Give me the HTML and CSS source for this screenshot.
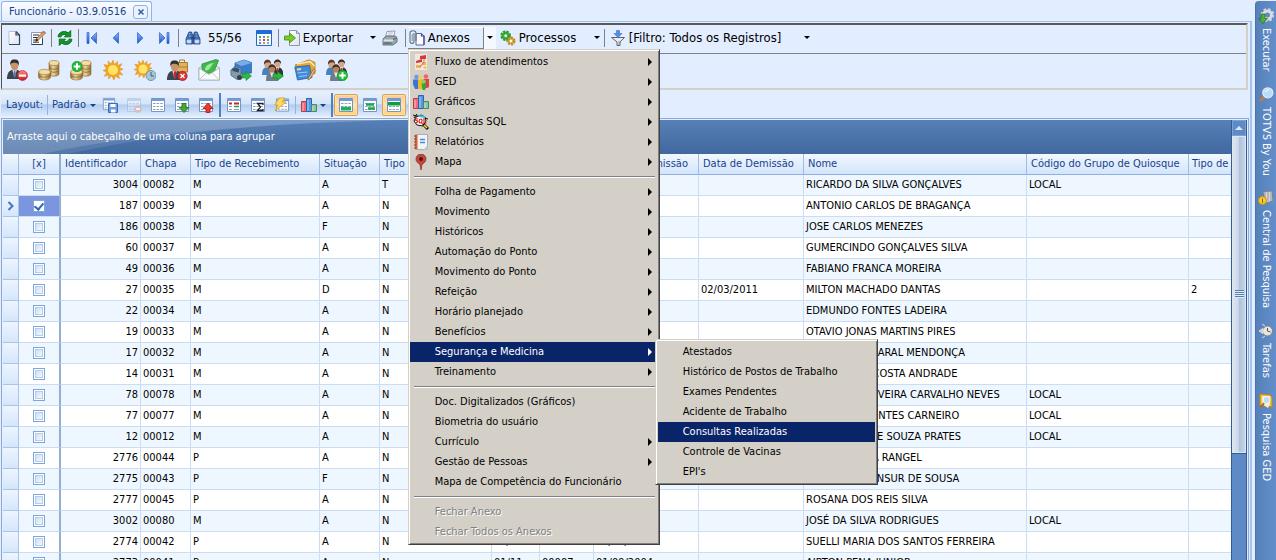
FILE: index.html
```
<!DOCTYPE html>
<html lang="pt-BR">
<head>
<meta charset="utf-8">
<title>Funcionário</title>
<link rel="stylesheet" href="styles.css">
</head>
<body>
<svg class="defs" aria-hidden="true">
  <defs>
    <linearGradient id="gold" x2="1" y2="0"><stop offset="0" stop-color="#8f6c33"/><stop offset=".4" stop-color="#edd9a0"/><stop offset="1" stop-color="#966e31"/></linearGradient>
    <linearGradient id="blue" x2="0" y2="1"><stop offset="0" stop-color="#8fbaf5"/><stop offset="1" stop-color="#1b52c4"/></linearGradient>
    <linearGradient id="paper" x2="1" y2="1"><stop offset="0" stop-color="#fff"/><stop offset="1" stop-color="#dde3ee"/></linearGradient>
    <linearGradient id="red" x2="0" y2="1"><stop offset="0" stop-color="#f88"/><stop offset="1" stop-color="#c61a1a"/></linearGradient>
  </defs>
  <symbol id="i-new" viewBox="0 0 16 16"><path d="M3 1.500h7l3.500 3.500v9.500H3z" fill="url(#paper)"/><path d="M3 14V1.500h7" fill="none" stroke="#b9c0ce"/><path d="M10 1.500V5h3.500v9.500H3M10 1.500L13.500 5" fill="none" stroke="#39445d" stroke-width="1.200"/></symbol>
  <symbol id="i-edit" viewBox="0 0 16 16"><path d="M1.500 2.500h11v12h-11z" fill="#fff" stroke="#8f9ab0"/><path d="M1.500 14.500h11v-6" fill="none" stroke="#333c50"/><path d="M3 5h6M3 7.500h5M3 10h3M3 12.200h6" stroke="#222c4e"/><path d="M13.500 1l2 2-7 7-3 1.500 1-3z" fill="#dca562" stroke="#8b5a35" stroke-width=".7"/><path d="M5.500 11.500l1-3 2 1.700z" fill="#222"/><path d="M13 1.500l2.200 2" stroke="#d46a55" stroke-width="1.500"/></symbol>
  <symbol id="i-refresh" viewBox="1 1 14 14"><path d="M2 7c0-4 5-6 9-3.500l2-2V7H7.500l1.700-1.700C7 4.300 5 5 4.500 7zM14 9c0 4-5 6-9 3.500l-2 2V9h5.500l-1.700 1.700C9 11.700 11 11 11.500 9z" fill="#109a25" stroke="#04671a" stroke-width=".8"/></symbol>
  <symbol id="i-prev" viewBox="0 0 16 16"><path d="M10.500 2.500v11L5 8z" fill="url(#blue)" stroke="#2a62c9" stroke-width=".7"/></symbol>
  <symbol id="i-next" viewBox="0 0 16 16"><path d="M5.500 2.500v11L11 8z" fill="url(#blue)" stroke="#2a62c9" stroke-width=".7"/></symbol>
  <symbol id="i-first" viewBox="0 0 16 16"><path d="M3 2.500h2v11H3zM12.500 2.500v11L7 8z" fill="url(#blue)" stroke="#2a62c9" stroke-width=".7"/></symbol>
  <symbol id="i-last" viewBox="0 0 16 16"><path d="M11 2.500h2v11h-2zM3.500 2.500v11L9 8z" fill="url(#blue)" stroke="#2a62c9" stroke-width=".7"/></symbol>
  <symbol id="i-bino" viewBox="0 0 16 16"><path d="M4 2h2.500l1 3v9H1V9zM12 2H9.500l-1 3v9H15V9z" fill="#426fb6" stroke="#1d3f7c" stroke-width=".8"/><path d="M6 7h4v2H6z" fill="#244a8a"/><path d="M2 10h4v3H2zM10 10h4v3h-4zM4 3.500h1.500M10.500 3.500H12M4 6h1.500M11 6h1.500" fill="#d7e6fa" stroke="#a9c5ec" stroke-width=".8"/></symbol>
  <symbol id="i-cal" viewBox="0 0 16 16"><path d="M.5.5h15v15H.5z" fill="#f6faff" stroke="#2768c7"/><path d="M1 1h14v3H1z" fill="#1d6bd8"/><path d="M3 6h2v2H3zM11 9h2v2h-2z" fill="#45ae54"/><path d="M7 6h2v2H7zM3 12h2v2H3z" fill="#5d85df"/><path d="M11 6h2v2h-2zM7 12h2v2H7z" fill="#e48a38"/><path d="M3 9h2v2H3zM11 12h2v2h-2z" fill="#a29bc9"/><path d="M7 9h2v2H7z" fill="#e04040"/></symbol>
  <symbol id="i-export" viewBox="0 0 16 16"><path d="M5.500.5h7l3 3v12h-10z" fill="url(#paper)" stroke="#8c98b0"/><path d="M12.500.5v3h3" fill="#c8d2e2" stroke="#8c98b0"/><path d="M.5 6h5V3l6 5-6 5v-3h-5z" fill="#7ccb22" stroke="#478a16" stroke-width=".8"/></symbol>
  <symbol id="i-print" viewBox="0 0 16 16"><path d="M5 1.500L13 1l-1.500 6H3.500z" fill="#fff" stroke="#7d8794" stroke-width=".8"/><path d="M6 3h5M5.500 5h5" stroke="#93a5bc" stroke-width=".8"/><path d="M1 9l3-3h9.500L15 8v4l-4 3H1z" fill="#9ba6b1" stroke="#515b66" stroke-width=".8"/><path d="M1.500 9.500H11v2H1.500z" fill="#dce1e5"/><path d="M2 13h8" stroke="#424a55"/><path d="M11 9.500L14.500 8" stroke="#555"/><path d="M8 12h2.500v1.500H8z" fill="#2cc24a"/></symbol>
  <symbol id="i-clip" viewBox="0 0 16 16"><path d="M7 3.500h5.500L15 6v9H7z" fill="#fbfcff" stroke="#5f6798"/><path d="M12.500 3.500V6H15v9" fill="none" stroke="#414a89" stroke-width="1.200"/><path d="M5 3v8.500c0 2.500-4 2.500-4 0V3c0-3 6-3 6 0v8" fill="none" stroke="#5e7380" stroke-width="1.100"/><path d="M3.200 4v7" stroke="#72909c"/></symbol>
  <symbol id="i-gears" viewBox="0 0 16 16"><circle cx="5.700" cy="5.700" r="3.800" fill="#4ab844" stroke="#2f9a30" stroke-dasharray="2.200 .8" stroke-width="3"/><circle cx="5.700" cy="5.700" r="1.300" fill="#eaffea"/><circle cx="11" cy="11" r="3.200" fill="#eab842" stroke="#c08c28" stroke-dasharray="2 .9" stroke-width="2.600"/><circle cx="11" cy="11" r="1.200" fill="#fff"/></symbol>
  <symbol id="i-filter" viewBox="0 0 16 16"><path d="M1.500 7.500h13L10 12v3.500H7V12z" fill="#e9edf1" stroke="#5a6470"/><path d="M9 11v4" stroke="#8a939f"/><path d="M6.500.5h3v3H12L8 7.500 4 3.500h2.500z" fill="#4f8ce2" stroke="#3673ca" stroke-width=".6"/></symbol>

  <symbol id="p-man" viewBox="0 0 22 22"><path d="M1 21c0-7 3-10 8-10s8 3 8 10z" fill="#3e444d"/><path d="M6.500 11h5L9 19z" fill="#f4f6f9"/><path d="M8.300 12h1.500l.8 5-1.600 3-1.500-3z" fill="#5779aa"/><ellipse cx="9" cy="6.500" rx="4" ry="5.500" fill="#c7946c"/><path d="M4.500 7C4 1.500 6 0 9.500.5 13 .5 14 3 13.300 7 13 4.500 11 3.500 8 4 6 4 5 5 4.500 7z" fill="#30302f"/></symbol>
  <symbol id="p-coins" viewBox="0 0 22 22"><path d="M11 4v11c0 3 10 3 10 0V4z" fill="url(#gold)" stroke="#8e6c36" stroke-width=".6"/><ellipse cx="16" cy="4" rx="5" ry="2.500" fill="#efdda5" stroke="#a88042" stroke-width=".7"/><path d="M11 8c2 3 8 3 10 0M11 11c2 3 8 3 10 0" fill="none" stroke="#8a672f" stroke-width=".8"/><path d="M.5 13v5c0 4 12 4 12 0v-5z" fill="url(#gold)" stroke="#8e6c36" stroke-width=".6"/><ellipse cx="6.500" cy="13" rx="6" ry="2.700" fill="#efdda5" stroke="#a88042" stroke-width=".7"/><path d="M.5 16c2 3 10 3 12 0" fill="none" stroke="#8a672f" stroke-width=".8"/></symbol>
  <symbol id="p-plus" viewBox="0 0 10 10"><circle cx="5" cy="5" r="4.700" fill="#23bb37" stroke="#0f8b25" stroke-width=".5"/><path d="M5 2v6M2 5h6" stroke="#fff" stroke-width="1.800"/></symbol>
  <symbol id="p-people" viewBox="0 0 22 22"><path d="M9 14c0-5 3-6 6-6s6 2 6 6v3H9z" fill="#303238"/><path d="M14 8h3l-1.500 6z" fill="#fff"/><path d="M15.500 9v4" stroke="#c22"/><ellipse cx="15.500" cy="4.500" rx="3" ry="4" fill="#d6a687"/><path d="M12 5c-1-6 8-6 7 0-1-3-5-3-7 0z" fill="#33302e"/><path d="M0 16c0-6 2-8 6-8s5 3 5 8z" fill="#4b81b7"/><ellipse cx="5.500" cy="4.800" rx="3.200" ry="4.200" fill="#d2a382"/><path d="M2 5.500C1-1 10-1 9 5.500 8 2.500 5 2.500 2 5.500z" fill="#5b3c2c"/><path d="M4 22c0-7 2-9 6-9s6 3 6 9z" fill="#6e7d8c"/><path d="M8 13h4l-2 6z" fill="#e7edf2"/><ellipse cx="10" cy="9.500" rx="3.200" ry="4.200" fill="#ba825c"/><path d="M6.500 10c-1-6 8-6 7 0-1-3-5-3-7 0z" fill="#38302d"/></symbol>
  <symbol id="p-sun" viewBox="0 0 22 22"><path d="M11 0l1.500 5L16 1.500 15.800 6l5.200-2-3 4.500 4 1.500-4 2 4 4.500-5-1 1 5-4-3-2 4.500-2.500-4.500L6 21l.5-4.500-5 1.500 2.500-4.500-4-2L4 10 1 5l5 1-.5-5L9 4.500z" fill="#f5a61c" stroke="#d9820a" stroke-width=".5"/><circle cx="11" cy="11" r="5.500" fill="#ffe468"/></symbol>

  <symbol id="i-man-minus" viewBox="0 0 22 22"><use href="#p-man" width="21" height="21"/><circle cx="16.500" cy="16.500" r="5" fill="url(#red)" stroke="#b81616" stroke-width=".6"/><path d="M13 15.500h7v2.200h-7z" fill="#fff"/></symbol>
  <symbol id="i-coins" viewBox="0 0 22 22"><use href="#p-coins"/></symbol>
  <symbol id="i-coins-plus" viewBox="0 0 22 22"><use href="#p-coins"/><use href="#p-plus" x="1.500" y="2" width="11" height="11"/></symbol>
  <symbol id="i-sun" viewBox="0 0 22 22"><use href="#p-sun" x="1" width="20"/></symbol>
  <symbol id="i-sun-clock" viewBox="0 0 22 22"><use href="#p-sun" width="18" height="20"/><circle cx="17" cy="16.500" r="5" fill="#a9c7d5" stroke="#6f96a9"/><path d="M17 13v4h3" fill="none" stroke="#33617e"/></symbol>
  <symbol id="i-man-case" viewBox="0 0 22 22"><path d="M10 3.500h11.500V13H10z" fill="#e1b25c" stroke="#a97d30"/><path d="M13.500 3V1h5v2M10 8h11" fill="none" stroke="#a97d30"/><use href="#p-man" width="21" height="21" y="1"/><path d="M8 13l1.200-1 1.200 1-.5 5-1 1-1-1z" fill="#c22"/><circle cx="16.500" cy="17" r="4.700" fill="#d83434" stroke="#a61616" stroke-width=".6"/><path d="M14.500 15l4 4m0-4l-4 4" stroke="#fff" stroke-width="1.400"/></symbol>
  <symbol id="i-mail" viewBox="0 0 22 22"><path d="M1 9l10-6 10.500 6v12H1z" fill="#eceff2" stroke="#9ea9b1" stroke-width=".8"/><path d="M4 5l14-4.500 2.500 1L16 13l-9 2-3-3z" fill="#43b84c" stroke="#268632" stroke-width=".7"/><path d="M7 11c0-4 4-7 9-7-2 1-2 3-4 5-1 2-3 3-5 2z" fill="#a1e79e"/><path d="M1 9l10 6.500L21.500 9v12H1z" fill="#f9fafb" stroke="#a4adb4" stroke-width=".8"/><path d="M1 21l7-7m13.500 7l-7-7" stroke="#bdc5ca"/></symbol>
  <symbol id="i-truck" viewBox="0 0 22 22"><path d="M5 4l9-3 7.500 2.500V14L11 15 5 10z" fill="#377ecb" stroke="#2360a4" stroke-width=".7"/><path d="M5 4l6.500 3L21.500 4 14 1z" fill="#78aee7"/><path d="M.8 11l4-3.500L11 9v10l-4 1.500-6-4z" fill="#8299b0" stroke="#506980" stroke-width=".8"/><path d="M2 10.500l3-2 4.500 1.500-1 3.500-6-1.500z" fill="#34516f"/><circle cx="9.500" cy="18.500" r="2.500" fill="#333d49"/><path d="M12 15h4v-2.500l5.500 4.500-5.500 4.500V19h-4z" fill="#31b845" stroke="#188a2b" stroke-width=".6"/></symbol>
  <symbol id="i-people-go" viewBox="0 0 22 22"><use href="#p-people"/><path d="M11 15h4.500v-2.500l6 4.500-6 4.500V19H11z" fill="#2db73f" stroke="#138429" stroke-width=".6"/></symbol>
  <symbol id="i-cards" viewBox="0 0 22 22"><path d="M1 6L15 .8l6 2.700v11L8 16z" fill="#e8a633" stroke="#aa7421" stroke-width=".7"/><path d="M3 5l13-2.500 4.500 4.500" fill="none" stroke="#faeac0" stroke-width="1.500"/><path d="M.8 8L15.500 6.500l2.500 12L3.500 21z" fill="#408ad7" stroke="#245da3" stroke-width=".8"/><path d="M3 10.500l4-.5" stroke="#f2d98a" stroke-width="2"/><path d="M3.500 14l10-1M5 17.500l8-1" stroke="#9bcaf4" stroke-width="1.100"/><path d="M19.500 10l2 1.500L16 20l-2 1 .5-2.500z" fill="#e6b56d" stroke="#7c5127" stroke-width=".6"/></symbol>
  <symbol id="i-people-plus" viewBox="0 0 22 22"><use href="#p-people"/><use href="#p-plus" x="11" y="11" width="11" height="11"/></symbol>

  <symbol id="p-sheet" viewBox="0 0 16 16"><path d="M1.500 1.500h13v13h-13z" fill="#fff" stroke="#7695c0"/><path d="M2 2h12v2H2z" fill="#6f9ee0"/><path d="M3 6.500h10M3 9.500h10M3 12.500h10" stroke="#8ba3c0" stroke-dasharray="2.600 1"/></symbol>
  <symbol id="i-sheet" viewBox="0 0 16 16"><use href="#p-sheet"/></symbol>
  <symbol id="i-sheet-save" viewBox="0 0 16 16"><use href="#p-sheet" width="14" height="14"/><path d="M6.500 6.500h9v9h-9z" fill="#6c9ee6" stroke="#3a6cb8"/><path d="M8.500 7h5v3h-5zM9 12.500h4.500v3H9z" fill="#fff"/></symbol>
  <symbol id="i-sheet-minus" viewBox="0 0 16 16"><g opacity=".28"><use href="#p-sheet"/></g><circle cx="12" cy="12" r="3.800" fill="#d5bfc6"/><path d="M10 12h4" stroke="#fff" stroke-width="1.500"/></symbol>
  <symbol id="i-sheet-down" viewBox="0 0 16 16"><use href="#p-sheet"/><path d="M8 6.500h4v4h3l-5 5-5-5h3z" fill="#46a63a" stroke="#226f21" stroke-width=".8"/></symbol>
  <symbol id="i-sheet-up" viewBox="0 0 16 16"><use href="#p-sheet"/><path d="M8 15.500h4v-4h3l-5-5.500-5 5.500h3z" fill="#ee3b2f" stroke="#a81512" stroke-width=".8"/></symbol>
  <symbol id="i-sheet-mark" viewBox="0 0 16 16"><use href="#p-sheet"/><path d="M2 4h12v10H2z" fill="#fff"/><path d="M3 6.500h3m2 0h5" stroke="#c42a2a" stroke-width="2"/><path d="M3 9.500h3m2 3h5" stroke="#829dbe"/><path d="M8 9.500h5" stroke="#28a33c" stroke-width="1.500"/><path d="M3 12.500h3" stroke="#829dbe"/></symbol>
  <symbol id="i-sheet-sum" viewBox="0 0 16 16"><use href="#p-sheet"/><path d="M13 8V6.500H7.500l3 3.500-3 3.500H13V12" fill="none" stroke="#222" stroke-width="1.300"/></symbol>
  <symbol id="i-sheet-bolt" viewBox="0 0 16 16"><use href="#p-sheet" x="1" width="15" height="16"/><path d="M5 1h6L8 5h4L1 14l3-6H.8z" fill="#ffd95e" stroke="#d99b25" stroke-width=".8"/></symbol>
  <symbol id="i-chart" viewBox="0 0 16 16"><path d="M.5 4.500h5v10h-5z" fill="#ee6c72" stroke="#bb3b46"/><path d="M5.500 1.500h5v13h-5z" fill="#5798e6" stroke="#2a61b4"/><path d="M10.500 7.500h5v7h-5z" fill="#8ac49e" stroke="#4b8864"/><path d="M2 6v8m5-11v11m5-5v5" stroke="#fff" stroke-opacity=".55"/></symbol>
  <symbol id="i-row-bottom" viewBox="0 0 16 16"><use href="#p-sheet"/><path d="M3 10h10v3.500H3z" fill="#20b254"/></symbol>
  <symbol id="i-row-mid" viewBox="0 0 16 16"><use href="#p-sheet"/><path d="M4 7.500h8m-6 4h7" stroke="#20a74c" stroke-width="2.500"/></symbol>
  <symbol id="i-row-top" viewBox="0 0 16 16"><use href="#p-sheet"/><path d="M2 5h12v3.500H2z" fill="#119d43"/></symbol>

  <symbol id="i-flow" viewBox="0 0 16 16"><path d="M2 0h12v16H2z" fill="#f4e6da"/><path d="M7 2l6-1v4H7zM3 7l6-2v3l-6 1z" fill="#d2373c"/><path d="M9 8h4v3H9zM3 11h5v3H3z" fill="#f1ad58"/><path d="M11 5v3L7 13" fill="none" stroke="#bd7c55"/><circle cx="12" cy="13.500" r="1.500" fill="#efc85a"/></symbol>
  <symbol id="i-ged" viewBox="0 0 16 16"><circle cx="3.500" cy="3" r="2.300" fill="#6a9de4"/><path d="M0 5.500h5V15H2L0 10z" fill="#3d74d0"/><circle cx="13" cy="2.500" r="2.300" fill="#f06868"/><path d="M10.500 5H16v8l-2 1h-3z" fill="#df3e45"/><circle cx="7.500" cy="3" r="2" fill="#f6d155"/><path d="M5 5.500h5V15H5z" fill="#ecb82c"/><circle cx="10.800" cy="7.500" r="2" fill="#7dd65e"/><path d="M8.500 9.500H13v4L12 16H9.500z" fill="#3aa62c"/></symbol>
  <symbol id="i-sql" viewBox="0 0 16 16"><path d="M0 1l15 4M1 4l3-4m3 1L5 4" stroke="#111"/><path d="M3 3l5-2 4 2 1 4-3 5-6-1-3-4z" fill="#fff" stroke="#111"/><path d="M6 2l6 1" stroke="#27c9e8" stroke-width="2"/><path d="M5 5c-3-1-3 1.500-1.500 1.500S5 9 2.500 8.500M8 5c-2.500 0-2.500 4-.5 4S9.500 5 8 5m0 3l1.500 2M11 4v5h2.500" fill="none" stroke="#dc1d1d" stroke-width="1.200"/><path d="M10 10l5 5" stroke="#111" stroke-width="3"/><path d="M11 11l3 3" stroke="#ffdf28" stroke-width="1.600"/></symbol>
  <symbol id="i-report" viewBox="0 0 16 16"><path d="M2.500.5h12v15h-12z" fill="#f1f3f7" stroke="#a7acb6"/><path d="M2 1h2.500v14H2z" fill="#d45f28"/><path d="M1 2h2M1 5h2M1 8h2M1 11h2M1 14h2" stroke="#8b4329"/><path d="M7 5.500h5m-5 3h5" stroke="#4c86d9" stroke-width="1.300"/><path d="M14.500 11l-4 4.500h4z" fill="#c6cbd4"/></symbol>
  <symbol id="i-pin" viewBox="0 0 16 16"><path d="M8 16L7 10.500C4 8.500 3 7 3 5a5 5 0 0110 0c0 2-1 3.500-4 5.500z" fill="#c5463d" stroke="#852b27" stroke-width=".7"/><circle cx="8" cy="5" r="2" fill="#4a1a18"/></symbol>

  <symbol id="i-run" viewBox="0 0 16 16"><circle cx="9.500" cy="7" r="4" fill="none" stroke="#d9dce1" stroke-width="3"/><circle cx="9.500" cy="7" r="6" fill="none" stroke="#d3d6dc" stroke-width="1.800" stroke-dasharray="2.500 2.200"/><path d="M3 6h4v4.500h2.500L5 15.500.5 10.500H3z" fill="#4daf3b" stroke="#28701f" stroke-width=".7"/></symbol>
  <symbol id="i-lens" viewBox="0 0 16 16"><path d="M7 9l-5 5" stroke="#b97d45" stroke-width="2.600"/><circle cx="9.800" cy="5.800" r="5" fill="#b8dcf8" stroke="#e2e9f4" stroke-width="1.300"/><path d="M7 5c1-2 3-2 4-2" fill="none" stroke="#fff"/></symbol>
  <symbol id="i-search-center" viewBox="0 0 16 16"><path d="M5 2l9-1 1 10-7 2z" fill="#d6d5d2" stroke="#7e8188"/><path d="M7 2v9m3-10v10m3-10v10" stroke="#96999f"/><circle cx="4.500" cy="10.500" r="4" fill="#f8cb32" stroke="#c48f14"/><path d="M4.500 8.500V13" stroke="#8b6915"/></symbol>
  <symbol id="i-task" viewBox="0 0 16 16"><circle cx="9.500" cy="8" r="5" fill="#e5e5e3" stroke="#7f8388"/><path d="M1 8l4-2.500v5zM7 3l-3-2M7 13l-3 2" fill="#ccc" stroke="#ddd"/><path d="M9.500 5v3l3 1" fill="none" stroke="#555"/></symbol>
  <symbol id="i-folder" viewBox="0 0 16 16"><path d="M2 1l10 1 2 2v10L2 12z" fill="#f4bd3f" stroke="#c48818"/><path d="M4 3h8v8l-2 4-6-4z" fill="#fff0bf"/><circle cx="8.500" cy="7" r="3.500" fill="#b5e0f5" stroke="#f5f7fa"/><path d="M6 10l-3 4" stroke="#c55c1b" stroke-width="2"/></symbol>
</svg>

<div class="app">
  <main class="workspace">
    <header class="tabs">
      <div class="tab"><span>Funcionário - 03.9.0516</span><button class="tab-close" aria-label="Fechar"><svg viewBox="0 0 8 8"><path d="M1.500 1.500l5 5m0-5l-5 5"/></svg></button></div>
    </header>

    <section class="page">
      <div class="commands">
        <div class="bar main-bar">
          <button class="tool" aria-label="Novo"><svg class="ic"><use href="#i-new"/></svg></button>
          <button class="tool" aria-label="Editar"><svg class="ic"><use href="#i-edit"/></svg></button>
          <i class="sep"></i>
          <button class="tool" aria-label="Atualizar"><svg class="ic"><use href="#i-refresh"/></svg></button>
          <i class="sep"></i>
          <button class="tool" aria-label="Primeiro"><svg class="ic"><use href="#i-first"/></svg></button>
          <button class="tool" aria-label="Anterior"><svg class="ic"><use href="#i-prev"/></svg></button>
          <button class="tool" aria-label="Próximo"><svg class="ic"><use href="#i-next"/></svg></button>
          <button class="tool" aria-label="Último"><svg class="ic"><use href="#i-last"/></svg></button>
          <i class="sep wide"></i>
          <button class="tool" aria-label="Localizar"><svg class="ic"><use href="#i-bino"/></svg></button>
          <span class="counter">55/56</span>
          <button class="tool" aria-label="Calendário"><svg class="ic"><use href="#i-cal"/></svg></button>
          <i class="sep wide"></i>
          <button class="labeled export"><svg class="ic"><use href="#i-export"/></svg>Exportar<b class="caret"></b></button>
          <button class="tool print" aria-label="Imprimir"><svg class="ic"><use href="#i-print"/></svg></button>
          <i class="sep wide"></i>
          <div class="anexos">
            <button class="labeled open"><svg class="ic"><use href="#i-clip"/></svg>Anexos</button>
            <ul class="menu">
              <li><button class="item"><svg class="ic"><use href="#i-flow"/></svg><span>Fluxo de atendimentos</span><b class="more"></b></button></li>
              <li><button class="item"><svg class="ic"><use href="#i-ged"/></svg><span>GED</span><b class="more"></b></button></li>
              <li><button class="item"><svg class="ic"><use href="#i-chart"/></svg><span>Gráficos</span><b class="more"></b></button></li>
              <li><button class="item"><svg class="ic"><use href="#i-sql"/></svg><span>Consultas SQL</span><b class="more"></b></button></li>
              <li><button class="item"><svg class="ic"><use href="#i-report"/></svg><span>Relatórios</span><b class="more"></b></button></li>
              <li><button class="item"><svg class="ic"><use href="#i-pin"/></svg><span>Mapa</span><b class="more"></b></button></li>
              <li class="rule"></li>
              <li><button class="item"><span>Folha de Pagamento</span><b class="more"></b></button></li>
              <li><button class="item"><span>Movimento</span><b class="more"></b></button></li>
              <li><button class="item"><span>Históricos</span><b class="more"></b></button></li>
              <li><button class="item"><span>Automação do Ponto</span><b class="more"></b></button></li>
              <li><button class="item"><span>Movimento do Ponto</span><b class="more"></b></button></li>
              <li><button class="item"><span>Refeição</span><b class="more"></b></button></li>
              <li><button class="item"><span>Horário planejado</span><b class="more"></b></button></li>
              <li><button class="item"><span>Benefícios</span><b class="more"></b></button></li>
              <li class="parent"><button class="item active"><span>Segurança e Medicina</span><b class="more"></b></button>
                <ul class="menu submenu">
                  <li><button class="item"><span>Atestados</span></button></li>
                  <li><button class="item"><span>Histórico de Postos de Trabalho</span></button></li>
                  <li><button class="item"><span>Exames Pendentes</span></button></li>
                  <li><button class="item"><span>Acidente de Trabalho</span></button></li>
                  <li><button class="item active"><span>Consultas Realizadas</span></button></li>
                  <li><button class="item"><span>Controle de Vacinas</span></button></li>
                  <li><button class="item"><span>EPI's</span></button></li>
                </ul>
              </li>
              <li><button class="item"><span>Treinamento</span><b class="more"></b></button></li>
              <li class="rule"></li>
              <li><button class="item"><span>Doc. Digitalizados (Gráficos)</span></button></li>
              <li><button class="item"><span>Biometria do usuário</span></button></li>
              <li><button class="item"><span>Currículo</span><b class="more"></b></button></li>
              <li><button class="item"><span>Gestão de Pessoas</span><b class="more"></b></button></li>
              <li><button class="item"><span>Mapa de Competência do Funcionário</span></button></li>
              <li class="rule"></li>
              <li><button class="item" disabled><span>Fechar Anexo</span></button></li>
              <li><button class="item" disabled><span>Fechar Todos os Anexos</span></button></li>
            </ul>
          </div>
          <button class="split" aria-label="Mais anexos"><b class="caret"></b></button>
          <button class="labeled process"><svg class="ic"><use href="#i-gears"/></svg>Processos<b class="caret"></b></button>
          <i class="sep"></i>
          <button class="labeled filter"><svg class="ic"><use href="#i-filter"/></svg>[Filtro: Todos os Registros]<b class="caret"></b></button>
        </div>
        <div class="bar big-bar">
          <button class="big" aria-label="Demitir"><svg><use href="#i-man-minus"/></svg></button>
          <button class="big" aria-label="Salários"><svg><use href="#i-coins"/></svg></button>
          <button class="big" aria-label="Adicionar valores"><svg><use href="#i-coins-plus"/></svg></button>
          <button class="big" aria-label="Férias"><svg><use href="#i-sun"/></svg></button>
          <button class="big" aria-label="Programar férias"><svg><use href="#i-sun-clock"/></svg></button>
          <button class="big" aria-label="Rescisão"><svg><use href="#i-man-case"/></svg></button>
          <button class="big" aria-label="Envelope"><svg><use href="#i-mail"/></svg></button>
          <button class="big" aria-label="Transporte"><svg><use href="#i-truck"/></svg></button>
          <button class="big" aria-label="Transferência"><svg><use href="#i-people-go"/></svg></button>
          <button class="big" aria-label="Cartões"><svg><use href="#i-cards"/></svg></button>
          <button class="big" aria-label="Adicionar pessoas"><svg><use href="#i-people-plus"/></svg></button>
        </div>
      </div>

      <div class="bar layout-bar">
        <span class="layout-label">Layout:</span>
        <button class="preset">Padrão<b class="caret"></b></button>
        <button class="tool" aria-label="Salvar layout"><svg class="ic"><use href="#i-sheet-save"/></svg></button>
        <button class="tool" aria-label="Excluir layout" disabled><svg class="ic"><use href="#i-sheet-minus"/></svg></button>
        <button class="tool" aria-label="Colunas"><svg class="ic"><use href="#i-sheet"/></svg></button>
        <button class="tool" aria-label="Importar"><svg class="ic"><use href="#i-sheet-down"/></svg></button>
        <button class="tool" aria-label="Exportar layout"><svg class="ic"><use href="#i-sheet-up"/></svg></button>
        <i class="divider"></i>
        <button class="tool" aria-label="Formatação"><svg class="ic"><use href="#i-sheet-mark"/></svg></button>
        <button class="tool" aria-label="Totais"><svg class="ic"><use href="#i-sheet-sum"/></svg></button>
        <button class="tool" aria-label="Atualização rápida"><svg class="ic"><use href="#i-sheet-bolt"/></svg></button>
        <i class="sep"></i>
        <button class="chart" aria-label="Gráfico"><svg class="ic"><use href="#i-chart"/></svg><b class="caret"></b></button>
        <i class="divider"></i>
        <button class="tool on" aria-label="Rodapé"><svg class="ic"><use href="#i-row-bottom"/></svg></button>
        <button class="tool" aria-label="Agrupamento"><svg class="ic"><use href="#i-row-mid"/></svg></button>
        <button class="tool on" aria-label="Cabeçalho"><svg class="ic"><use href="#i-row-top"/></svg></button>
      </div>

      <div class="grid">
        <div class="grid-body">
          <div class="group-panel"><svg class="swoosh" viewBox="0 0 400 34" preserveAspectRatio="none" aria-hidden="true"><path d="M0 0H400C270 2 160 13 65 34H0z" fill="#fff" fill-opacity=".1"/><path d="M0 0H400C240 4 120 16 40 34H0z" fill="#fff" fill-opacity=".14"/></svg><span>Arraste aqui o cabeçalho de uma coluna para agrupar</span></div>
          <table>
            <colgroup><col class="w-ind"><col class="w-chk"><col class="w-id"><col class="w-chapa"><col class="w-rec"><col class="w-sit"><col class="w-tipo"><col class="w-hour"><col class="w-code"><col class="w-date"><col class="w-date"><col class="w-name"><col class="w-group"><col class="w-last"></colgroup>
            <thead><tr><th></th><th>[x]</th><th>Identificador</th><th>Chapa</th><th>Tipo de Recebimento</th><th>Situação</th><th>Tipo</th><th></th><th></th><th>Data de Admissão</th><th>Data de Demissão</th><th>Nome</th><th>Código do Grupo de Quiosque</th><th>Tipo de</th></tr></thead>
            <tbody>
              <tr><td></td><td><input type="checkbox" aria-label="3004"></td><td>3004</td><td>00082</td><td>M</td><td>A</td><td>T</td><td></td><td></td><td></td><td></td><td>RICARDO DA SILVA GONÇALVES</td><td>LOCAL</td><td></td></tr>
              <tr class="current"><td><svg viewBox="0 0 8 10"><path d="M1.500 1l4 4-4 4"/></svg></td><td><input type="checkbox" checked aria-label="187"></td><td>187</td><td>00039</td><td>M</td><td>A</td><td>N</td><td></td><td></td><td></td><td></td><td>ANTONIO CARLOS DE BRAGANÇA</td><td></td><td></td></tr>
              <tr><td></td><td><input type="checkbox" aria-label="186"></td><td>186</td><td>00038</td><td>M</td><td>F</td><td>N</td><td></td><td></td><td></td><td></td><td>JOSE CARLOS MENEZES</td><td></td><td></td></tr>
              <tr><td></td><td><input type="checkbox" aria-label="60"></td><td>60</td><td>00037</td><td>M</td><td>A</td><td>N</td><td></td><td></td><td></td><td></td><td>GUMERCINDO GONÇALVES SILVA</td><td></td><td></td></tr>
              <tr><td></td><td><input type="checkbox" aria-label="49"></td><td>49</td><td>00036</td><td>M</td><td>A</td><td>N</td><td></td><td></td><td></td><td></td><td>FABIANO FRANCA MOREIRA</td><td></td><td></td></tr>
              <tr><td></td><td><input type="checkbox" aria-label="27"></td><td>27</td><td>00035</td><td>M</td><td>D</td><td>N</td><td></td><td></td><td></td><td>02/03/2011</td><td>MILTON MACHADO DANTAS</td><td></td><td>2</td></tr>
              <tr><td></td><td><input type="checkbox" aria-label="22"></td><td>22</td><td>00034</td><td>M</td><td>A</td><td>N</td><td></td><td></td><td></td><td></td><td>EDMUNDO FONTES LADEIRA</td><td></td><td></td></tr>
              <tr><td></td><td><input type="checkbox" aria-label="19"></td><td>19</td><td>00033</td><td>M</td><td>A</td><td>N</td><td></td><td></td><td></td><td></td><td>OTAVIO JONAS MARTINS PIRES</td><td></td><td></td></tr>
              <tr><td></td><td><input type="checkbox" aria-label="17"></td><td>17</td><td>00032</td><td>M</td><td>A</td><td>N</td><td></td><td></td><td></td><td></td><td>MARCELLO AMARAL MENDONÇA</td><td></td><td></td></tr>
              <tr><td></td><td><input type="checkbox" aria-label="14"></td><td>14</td><td>00031</td><td>M</td><td>A</td><td>N</td><td></td><td></td><td></td><td></td><td>MARIANA DA COSTA ANDRADE</td><td></td><td></td></tr>
              <tr><td></td><td><input type="checkbox" aria-label="78"></td><td>78</td><td>00078</td><td>M</td><td>A</td><td>N</td><td></td><td></td><td></td><td></td><td>MARCIANA OLIVEIRA CARVALHO NEVES</td><td>LOCAL</td><td></td></tr>
              <tr><td></td><td><input type="checkbox" aria-label="77"></td><td>77</td><td>00077</td><td>M</td><td>A</td><td>N</td><td></td><td></td><td></td><td></td><td>CARMELITA FONTES CARNEIRO</td><td>LOCAL</td><td></td></tr>
              <tr><td></td><td><input type="checkbox" aria-label="12"></td><td>12</td><td>00012</td><td>M</td><td>A</td><td>N</td><td></td><td></td><td></td><td></td><td>ALEXANDRA DE SOUZA PRATES</td><td>LOCAL</td><td></td></tr>
              <tr><td></td><td><input type="checkbox" aria-label="2776"></td><td>2776</td><td>00044</td><td>P</td><td>A</td><td>N</td><td></td><td></td><td></td><td></td><td>MARIA PAOLLA RANGEL</td><td></td><td></td></tr>
              <tr><td></td><td><input type="checkbox" aria-label="2775"></td><td>2775</td><td>00043</td><td>P</td><td>F</td><td>N</td><td></td><td></td><td></td><td></td><td>MARCIANA MANSUR DE SOUSA</td><td></td><td></td></tr>
              <tr><td></td><td><input type="checkbox" aria-label="2777"></td><td>2777</td><td>00045</td><td>P</td><td>A</td><td>N</td><td></td><td></td><td></td><td></td><td>ROSANA DOS REIS SILVA</td><td></td><td></td></tr>
              <tr><td></td><td><input type="checkbox" aria-label="3002"></td><td>3002</td><td>00080</td><td>M</td><td>A</td><td>N</td><td></td><td></td><td></td><td></td><td>JOSÉ DA SILVA RODRIGUES</td><td>LOCAL</td><td></td></tr>
              <tr><td></td><td><input type="checkbox" aria-label="2774"></td><td>2774</td><td>00042</td><td>P</td><td>A</td><td>N</td><td>08/04</td><td>00006</td><td>06/09/2004</td><td></td><td>SUELLI MARIA DOS SANTOS FERREIRA</td><td></td><td></td></tr>
              <tr><td></td><td><input type="checkbox" aria-label="2773"></td><td>2773</td><td>00041</td><td>P</td><td>A</td><td>N</td><td>01/11</td><td>00007</td><td>01/09/2004</td><td></td><td>AIRTON PENA JUNIOR</td><td></td><td></td></tr>
            </tbody>
          </table>
        </div>
        <div class="scroll"><button class="up" aria-label="Rolar para cima"></button><div class="thumb"><i></i></div></div>
      </div>
    </section>
  </main>

  <nav class="dock">
    <a href="#executar"><svg class="ic"><use href="#i-run"/></svg><span>Executar</span></a>
    <a href="#totvs"><svg class="ic"><use href="#i-lens"/></svg><span>TOTVS By You</span></a>
    <a href="#central"><svg class="ic"><use href="#i-search-center"/></svg><span>Central de Pesquisa</span></a>
    <a href="#tarefas"><svg class="ic"><use href="#i-task"/></svg><span>Tarefas</span></a>
    <a href="#ged"><svg class="ic"><use href="#i-folder"/></svg><span>Pesquisa GED</span></a>
  </nav>
</div>
</body>
</html>
```
FILE: styles.css
```
* { box-sizing: border-box; }

body {
  margin: 0;
  background: #e2edff;
  color: #000;
  font: 11px/14px "DejaVu Sans Condensed", "DejaVu Sans", sans-serif;
  overflow: hidden;
}

button {
  margin: 0;
  padding: 0;
  border: 0;
  background: none;
  color: inherit;
  font: inherit;
}

ul { margin: 0; padding: 0; list-style: none; }

.defs { position: absolute; width: 0; height: 0; }
.ic { width: 16px; height: 16px; flex: none; }

.app {
  display: grid;
  grid-template-columns: minmax(0, 1fr) 21px;
  height: 100vh;
}

.workspace { display: flex; flex-direction: column; min-height: 0; padding-right: 3px; }

/* document tabs */
.tabs {
  display: flex;
  align-items: flex-end;
  flex: none;
  height: 22px;
  padding-left: 1px;
  border-bottom: 1px solid #a0c2ee;
}
.tab {
  display: flex;
  align-items: center;
  gap: 7px;
  height: 20px;
  padding: 0 3px 0 7px;
  border: 1px solid #8fb4e6;
  border-bottom: 0;
  border-radius: 3px 3px 0 0;
  background: linear-gradient(#fafcff, #e2edff);
  color: #17428b;
}
.tab-close {
  display: flex;
  align-items: center;
  justify-content: center;
  width: 15px;
  height: 14px;
  border: 1px solid #8db2e3;
  border-radius: 3px;
  background: #eaf3ff;
}
.tab-close svg { width: 8px; height: 8px; flex: none; stroke: #35619f; stroke-width: 1.5; fill: none; }

.page {
  display: flex;
  flex-direction: column;
  flex: 1;
  min-height: 0;
  padding: 1px 1px 0 1px;
  border-right: 2px solid #a3c2ee;
}

/* command toolbars */
.commands {
  flex: none;
  margin-right: 1px;
  padding-top: 1px;
  border: 2px solid #d4d0c8;
  border-top-color: #5c5a57;
  border-left: 1px solid #55534f;
}
.bar { display: flex; align-items: center; }
.bar .sep { width: 1px; height: 18px; margin: 0 1px; background: #808080; }
.bar .wide { margin: 0 2px; }
.tool, .big { display: flex; align-items: center; justify-content: center; flex: none; }
.tool { width: 24px; height: 22px; }
.print { width: 26px; }

.caret {
  width: 0;
  height: 0;
  border: 3px solid transparent;
  border-top-color: currentColor;
  border-bottom: 0;
}

.main-bar {
  height: 28px;
  padding-bottom: 4px;
  border-bottom: 1px solid #808080;
  font-size: 13px;
  line-height: 16px;
}
.counter { padding: 0 10px 0 3px; }
.labeled { display: flex; align-items: center; gap: 3px; height: 22px; white-space: nowrap; }
.labeled .caret { margin-left: auto; }
.export { width: 96px; padding: 0 1px 0 3px; }
.process { width: 107px; padding: 0 3px 0 4px; }
.filter { width: 205px; padding: 0 1px 0 4px; }

.anexos { position: relative; }
.open {
  width: 76px;
  padding-left: 1px;
  border-right: 1px solid #808080;
  border-bottom: 1px solid #808080;
  border-top: 1px solid #fff;
}
.split {
  display: flex;
  align-items: center;
  justify-content: center;
  width: 12px;
  height: 22px;
  background: #f4f8ff;
}

.big-bar { height: 34px; padding: 0 4px 2px; gap: 10px; }
.big, .big svg { width: 22px; height: 22px; }

/* popup menus */
.menu {
  position: absolute;
  z-index: 2;
  top: 100%;
  left: 0;
  width: 252px;
  padding: 2px 4px 2px 1px;
  border: 1px solid #404040;
  border-top-color: #d4d0c8;
  border-left-color: #d4d0c8;
  background: #d4d0c8;
  box-shadow: inset 1px 1px #fff, inset -1px -1px #808080;
  font-size: 11px;
  line-height: 14px;
}
.item {
  display: flex;
  align-items: center;
  width: 100%;
  height: 20px;
  padding: 0 3px 0 25px;
  text-align: left;
  white-space: nowrap;
}
.item .ic { margin: 0 6px 0 -22px; }
.item .more {
  margin-left: auto;
  border: 4px solid transparent;
  border-left-color: currentColor;
  border-right: 0;
}
.item.active { background: #0a246a; color: #fff; }
.item:disabled { color: #808080; text-shadow: 1px 1px #fff; }
.rule { height: 10px; padding: 4px 0 4px 4px; }
.rule::before {
  content: "";
  display: block;
  height: 2px;
  background: linear-gradient(#808080 50%, #fff 50%);
}
.parent { position: relative; }
.submenu { top: -3px; left: 100%; width: 223px; padding: 2px; }

/* layout toolbar */
.layout-bar {
  align-self: flex-start;
  flex: none;
  width: 640px;
  height: 26px;
  margin-top: 2px;
  padding-left: 5px;
  border-radius: 2px;
  background: linear-gradient(#e7f0fd, #d5e4f8 45%, #b3cdef 50%, #dbe9fc 90%, #eff5ff);
  color: #17428b;
}
.layout-bar .sep { height: 18px; background: #93b4e0; }
.layout-label { padding-right: 4px; margin-right: 4px; border-right: 1px solid #93b4e0; line-height: 20px; }
.preset { display: flex; align-items: center; gap: 4px; padding-right: 2px; }
.divider { width: 2px; height: 24px; margin: 0 1px; background: #5080bd; }
.chart { display: flex; align-items: center; gap: 3px; width: 29px; margin-left: 4px; }
.tool.on {
  border: 1px solid #dca056;
  border-radius: 2px;
  background: linear-gradient(#f9c995, #fde3b3 50%, #ffd083);
  box-shadow: inset 0 0 0 1px #ffe0a8;
}

/* data grid */
.grid {
  display: grid;
  grid-template-columns: minmax(0, 1fr) 16px;
  flex: 1;
  min-height: 0;
  padding: 1px 1px 0 1px;
  border: 1px solid #8eaad2;
  border-bottom: 0;
}
.grid-body { overflow: hidden; }
.group-panel {
  position: relative;
  height: 34px;
  padding: 10px 4px;
  background: linear-gradient(#5680b7, #41689f);
  color: #fff;
}
.group-panel span { position: relative; }
.swoosh { position: absolute; top: 0; left: 0; width: 400px; height: 34px; }

table { width: 100%; border-collapse: separate; border-spacing: 0; table-layout: fixed; }
.w-ind { width: 16px; }
.w-chk { width: 42px; }
.w-id { width: 80px; }
.w-chapa { width: 50px; }
.w-rec { width: 129px; }
.w-sit { width: 60px; }
.w-tipo { width: 112px; }
.w-hour { width: 48px; }
.w-code { width: 54px; }
.w-date { width: 105px; }
.w-group { width: 162px; }
.w-last { width: 42px; }

th, td { overflow: hidden; white-space: nowrap; text-align: left; }
th {
  height: 21px;
  padding: 0 4px;
  border-right: 1px solid #9dbce6;
  border-bottom: 1px solid #8fb0e0;
  background: linear-gradient(#f2f8ff, #d3e4fa);
  color: #17428b;
  font-weight: normal;
}
th:last-child { padding: 0 0 0 3px; }
td {
  height: 21px;
  padding: 0 2px;
  border-right: 1px solid #cbddf2;
  border-bottom: 1px solid #cbddf2;
  background: #fff;
}
tr:nth-child(odd) td { background: #eef7ff; }
tr td:first-child, tr:nth-child(odd) td:first-child {
  border-color: #a8c4e9;
  background: linear-gradient(#edf5ff, #d5e6fb);
}
tr td:last-child, tr th:last-child { border-right: 0; }
td:nth-child(2), th:nth-child(2) { padding: 0; border-right: 2px solid #93aed3; text-align: center; }
td:nth-child(3) { text-align: right; }
.current td:nth-child(2) { background: #7b96df; }
.current svg { display: block; width: 8px; height: 10px; margin-left: 2px; fill: none; stroke: #4876b5; stroke-width: 2; }

input[type="checkbox"] {
  display: block;
  appearance: none;
  width: 12px;
  height: 12px;
  margin: 0 auto;
  border: 1px solid #7da7dc;
  background: linear-gradient(135deg, #c4d8f1, #fff);
  box-shadow: inset 0 0 0 1px #fff, inset 0 0 0 2px #b4cdea;
}
input[type="checkbox"]:checked { background: #fff; box-shadow: none; }
input:checked::after {
  content: "";
  display: block;
  width: 4px;
  height: 7px;
  margin: 0 auto;
  border: solid #2f6ab5;
  border-width: 0 2px 2px 0;
  rotate: 40deg;
}

.scroll {
  display: flex;
  flex-direction: column;
  border: solid #325b9b;
  border-width: 0 1px;
  background: #5e8ac5;
}
.up { display: flex; align-items: center; justify-content: center; height: 16px; border: 1px solid #7ba2d5; }
.up::after { content: ""; border: 4px solid transparent; border-bottom-color: #dce8f8; border-top: 0; }
.thumb {
  display: flex;
  align-items: center;
  justify-content: center;
  height: 72%;
  border: 1px solid #dce7f4;
  background: linear-gradient(90deg, #dce5f0, #cdd9e8 45%, #adc1da 50%, #c6d5e8);
  box-shadow: 0 1px #325b9b;
}
.thumb i { width: 9px; height: 8px; background: repeating-linear-gradient(#557dad 0 1px, #e1eaf6 1px 2px); }

/* right dock */
.dock {
  display: flex;
  flex-direction: column;
  gap: 15px;
  margin-top: 1px;
  padding: 7px 2px;
  border-left: 1px solid #4674b2;
  border-radius: 4px 0 0 0;
  background: linear-gradient(90deg, #5780b8, #628fcc);
  color: #fff;
}
.dock a { display: flex; flex-direction: column; align-items: center; gap: 4px; color: inherit; text-decoration: none; }
.dock span { writing-mode: vertical-rl; white-space: nowrap; }
```
